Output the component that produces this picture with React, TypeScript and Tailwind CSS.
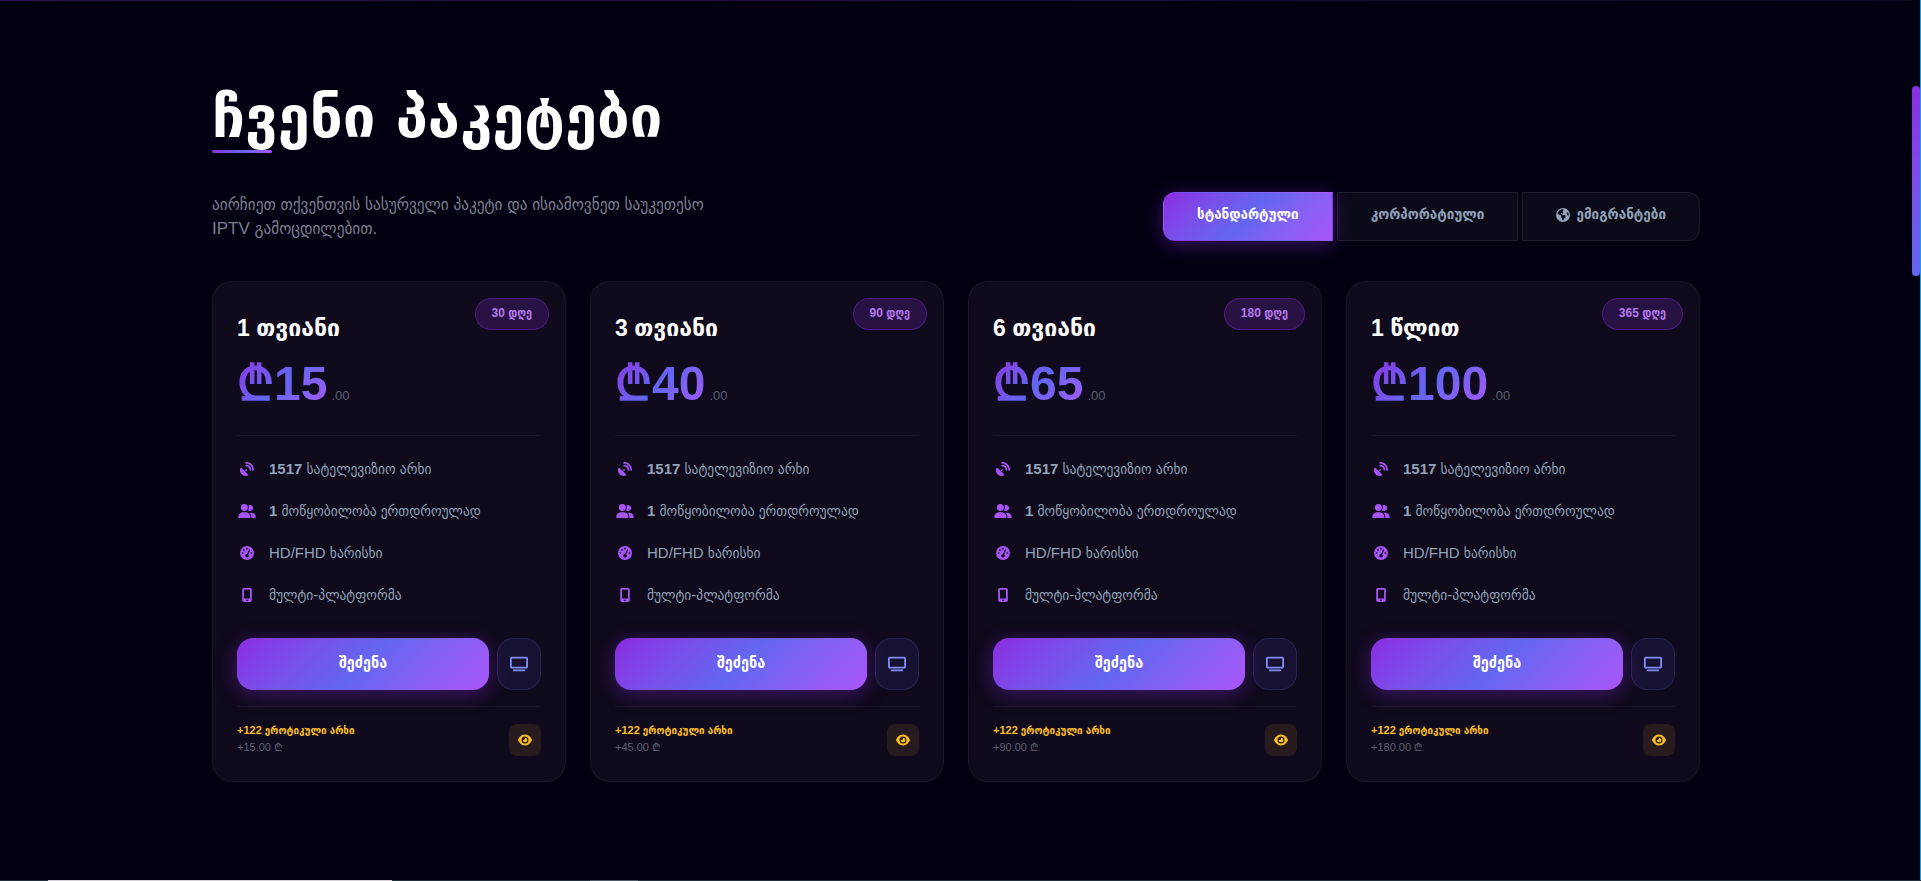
import React, { useState } from 'react';
import {
  FaEarthAmericas,
  FaEye,
  FaGaugeHigh,
  FaMobileScreenButton,
  FaSatelliteDish,
  FaTv,
  FaUserGroup,
} from 'react-icons/fa6';

interface Plan {
  name: string;
  days: number;
  price: number;
  adultPrice: string;
}

const plans: Plan[] = [
  { name: '1 თვიანი', days: 30, price: 15, adultPrice: '15.00' },
  { name: '3 თვიანი', days: 90, price: 40, adultPrice: '45.00' },
  { name: '6 თვიანი', days: 180, price: 65, adultPrice: '90.00' },
  { name: '1 წლით', days: 365, price: 100, adultPrice: '180.00' },
];

const tabs = [
  { id: 'standard', label: 'სტანდარტული', globe: false },
  { id: 'corporate', label: 'კორპორატიული', globe: false },
  { id: 'emigrant', label: 'ემიგრანტები', globe: true },
];

const PlanCard: React.FC<{ plan: Plan }> = ({ plan }) => (
  <article className="relative flex flex-col rounded-[20px] border border-white/5 bg-[#0f0a1c] p-6">
    <span className="absolute top-4 right-4 flex h-8 items-center rounded-full border border-[#8a2be2]/40 bg-[#8a2be2]/20 px-4 pb-0.5 text-xs font-bold text-[#b57bee]">
      {plan.days} დღე
    </span>

    <h3 className="mt-2 font-['Liberation_Sans','DejaVu_Sans',sans-serif] text-[23px] leading-7 font-bold text-white">
      {plan.name}
    </h3>

    <div className="mt-[10px] flex items-baseline border-b border-white/5 pb-[19px]">
      <span className="bg-linear-135 from-[#8a2be2] via-[#6366f1] to-[#a855f7] bg-clip-text font-['Liberation_Sans','DejaVu_Sans',sans-serif] text-5xl leading-[64px] font-bold text-transparent">
        ₾{plan.price}
      </span>
      <span className="ml-1 text-[13px] text-[#5b6070]">.00</span>
    </div>

    <ul className="mt-[21px] flex flex-col gap-[18px] text-[15px] leading-6 text-[#94a3b8]">
      <li className="flex items-center gap-3">
        <FaSatelliteDish className="w-5 text-sm text-[#a855f7]" />
        <span>
          <strong>1517</strong> სატელევიზიო არხი
        </span>
      </li>
      <li className="flex items-center gap-3">
        <FaUserGroup className="w-5 text-sm text-[#a855f7]" />
        <span>
          <strong>1</strong> მოწყობილობა ერთდროულად
        </span>
      </li>
      <li className="flex items-center gap-3">
        <FaGaugeHigh className="w-5 text-sm text-[#a855f7]" />
        <span>HD/FHD ხარისხი</span>
      </li>
      <li className="flex items-center gap-3">
        <FaMobileScreenButton className="w-5 text-sm text-[#a855f7]" />
        <span>მულტი-პლატფორმა</span>
      </li>
    </ul>

    <div className="mt-[31px] flex gap-2">
      <button className="h-[52px] flex-1 rounded-2xl bg-linear-135 from-[#8a2be2] via-[#6366f1] to-[#a855f7] pb-0.5 text-base font-bold text-white shadow-[0_4px_20px_rgba(138,43,226,0.4)]">
        შეძენა
      </button>
      <button
        aria-label="TV"
        className="flex h-[52px] w-11 items-center justify-center rounded-2xl border border-[#6366f1]/20 bg-[#6366f1]/10 text-lg text-[#818cf8]"
      >
        <FaTv />
      </button>
    </div>

    <div className="mt-4 flex items-center justify-between border-t border-white/5 pt-4">
      <div>
        <p className="text-[11px] leading-[14px] font-bold text-[#fbbf24]">+122 ეროტიკული არხი</p>
        <p className="text-[11px] leading-5 text-[#5b6070]">+{plan.adultPrice} ₾</p>
      </div>
      <button
        aria-label="18+"
        className="flex size-8 items-center justify-center rounded-lg bg-[#fbbf24]/10 text-sm text-[#fbbf24]"
      >
        <FaEye />
      </button>
    </div>
  </article>
);

export default function App() {
  const [active, setActive] = useState('standard');

  return (
    <div className="min-h-screen bg-[#020010] pr-[9px] font-['Liberation_Sans','DejaVu_Sans_Condensed','DejaVu_Sans',sans-serif]">
      <div className="h-px bg-linear-to-r from-[#2c1254] to-[#0b0820]" />

      <section className="mx-auto max-w-[1536px] px-6 pt-[83px] pb-[98px]">
        <h2 className="font-['DejaVu_Sans',sans-serif] text-[58px] leading-[66px] font-bold text-white">
          ჩვენი პაკეტები
        </h2>
        <div className="h-[3px] w-15 rounded-full bg-linear-to-r from-[#8a2be2] via-[#6366f1] to-[#a855f7]" />

        <div className="mt-[39px] flex items-end justify-between">
          <p className="max-w-lg text-[17px] leading-6 text-[#7b8190]">
            აირჩიეთ თქვენთვის სასურველი პაკეტი და ისიამოვნეთ საუკეთესო IPTV გამოცდილებით.
          </p>
          <div className="flex gap-1">
            {tabs.map((tab) => (
              <button
                key={tab.id}
                onClick={() => setActive(tab.id)}
                className={`flex h-[49px] items-center gap-1.5 border px-[33px] pb-1 text-[15px] font-bold first:rounded-l-xl last:rounded-r-xl ${
                  active === tab.id
                    ? 'border-transparent bg-linear-135 from-[#8a2be2] via-[#6366f1] to-[#a855f7] text-white shadow-[0_4px_20px_rgba(138,43,226,0.4)]'
                    : 'border-white/8 bg-white/4 text-[#94a3b8]'
                }`}
              >
                {tab.globe && <FaEarthAmericas className="text-sm" />}
                {tab.label}
              </button>
            ))}
          </div>
        </div>

        <div className="mt-10 grid grid-cols-4 gap-6">
          {plans.map((plan) => (
            <PlanCard key={plan.name} plan={plan} />
          ))}
        </div>
      </section>

      {/* scrollbar thumb */}
      <div className="fixed top-[86px] right-px h-[190px] w-2 rounded-full bg-linear-to-b from-[#8a2be2] to-[#6366f1]" />

      {/* window edges */}
      <div className="fixed inset-y-0 right-0 w-px bg-[#1aa0e0]" />
      <div className="fixed inset-x-0 bottom-0 flex h-px bg-[#22303c]">
        <div className="ml-12 w-[344px] bg-[#d8d0d8]" />
        <div className="ml-[198px] w-12 bg-[#4d5a64]" />
      </div>
    </div>
  );
}
